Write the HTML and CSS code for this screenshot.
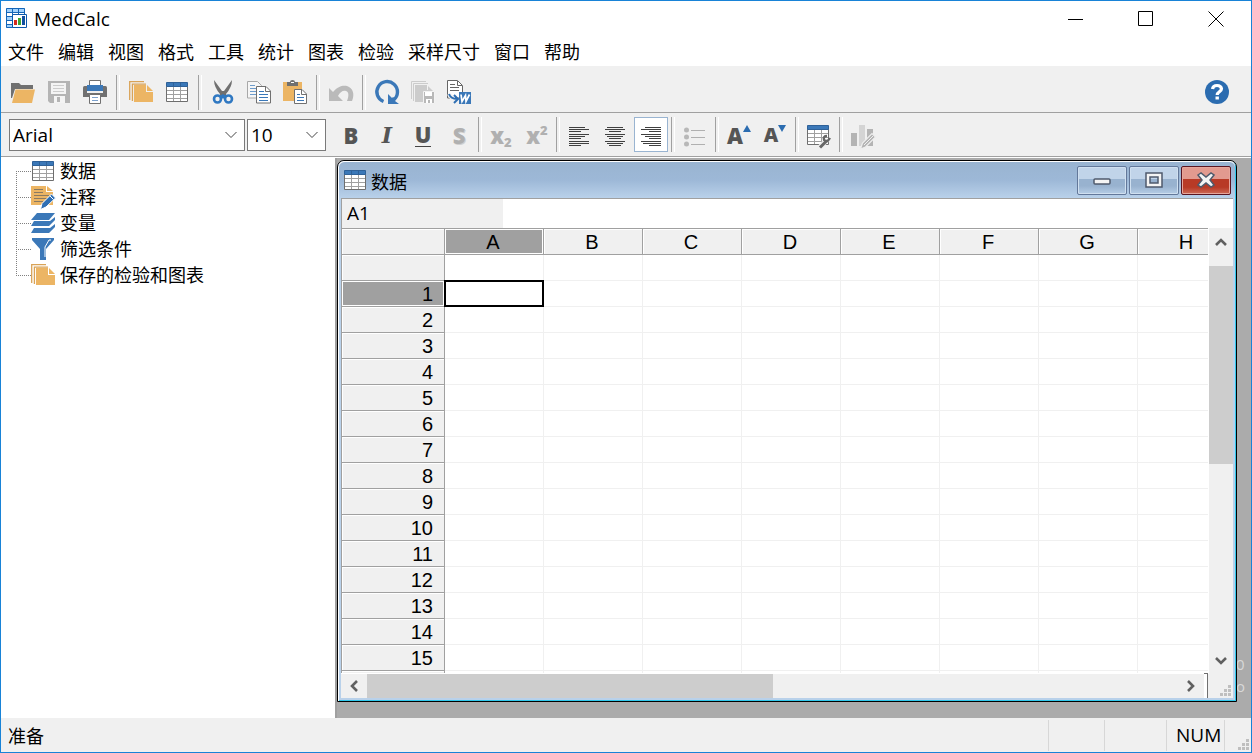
FILE: index.html
```html
<!DOCTYPE html>
<html lang="zh-CN">
<head>
<meta charset="utf-8">
<title>MedCalc</title>
<link rel="stylesheet" href="styles.css">
</head>
<body>
<svg class="defs" aria-hidden="true">
  <symbol id="i-table" viewBox="0 0 24 24">
    <path fill="#fff" stroke="#6e6e6e" d="M1.500 6.500h21v15h-21z"/>
    <path fill="none" stroke="#a0a0a0" d="M8.500 7v14M15.500 7v14M2 10.500h20M2 14.500h20M2 18.500h20"/>
    <path fill="#3b78b8" stroke="#2f6198" d="M1.500 2.500h21v4h-21z"/>
    <path stroke="#2f6198" d="M8.500 3v3M15.500 3v3"/>
  </symbol>
  <symbol id="i-stack" viewBox="0 0 24 24">
    <path fill="none" stroke="#d9a357" stroke-width="1.300" d="M.7 20V1.700H15M3.400 21V4.200H17"/>
    <path fill="#ecb564" d="M5 5h12v7h7v10H5z"/>
    <path fill="#ecb564" d="M18 5l6 6h-6z"/>
  </symbol>
</svg>
<div class="app">
  <header class="titlebar">
    <svg class="logo" viewBox="0 0 21 21" aria-hidden="true">
      <path fill="#9fd0fb" d="M0 0h19v20H0z"/>
      <path fill="#fff" d="M1 5h5v3H1zM7 5h5v3H7zM13 5h5v3h-5zM1 13h5v3H1z"/>
      <path fill="none" stroke="#1566b8" d="M.5.500h18v19H.5zM6.500 0v20M12.500 0v8M0 4.500h19M0 8.500h8M0 12.500h8M0 16.500h8"/>
      <path fill="#fff" stroke="#0b58ab" d="M6.500 6.500h14v13h-14z"/>
      <path fill="#d52b1e" d="M8 12h3v5H8z"/><path fill="#3da52e" d="M12 10h3v7h-3z"/><path fill="#114f9e" d="M16 8h3v9h-3z"/>
    </svg>
    <h1>MedCalc</h1>
    <div class="sysbuttons">
      <button aria-label="最小化"><svg viewBox="0 0 16 16"><path d="M0 8.500h15"/></svg></button>
      <button aria-label="最大化"><svg viewBox="0 0 16 16"><path d="M.5.500h14v14H.5z"/></svg></button>
      <button aria-label="关闭"><svg viewBox="0 0 16 16"><path d="M.5.500l15 15M15.500.500l-15 15"/></svg></button>
    </div>
  </header>
  <nav class="menubar">
    <button>文件</button><button>编辑</button><button>视图</button><button>格式</button><button>工具</button><button>统计</button><button>图表</button><button>检验</button><button>采样尺寸</button><button>窗口</button><button>帮助</button>
  </nav>
  <div class="toolbar standard" role="toolbar" aria-label="标准">
    <button aria-label="打开"><svg viewBox="0 0 24 24"><path fill="#707070" d="M0 3h8l2 2h12v4H4L1 18H0z"/><path fill="#ecb564" d="M4.500 9.500H24L21 23H1z"/></svg></button>
    <button aria-label="保存"><svg viewBox="0 0 24 24"><path fill="#b4b4b4" d="M1 1h22v22H3l-2-2z"/><path fill="#f4f4f4" d="M4 3h15v11H4zM7 16h11v7H7z"/><path stroke="#ccc" d="M6 5.500h11M6 8.500h11M6 11.500h11"/><path fill="#b4b4b4" d="M10 17h3v5h-3z"/></svg></button>
    <button aria-label="打印"><svg viewBox="0 0 24 24"><path fill="#707070" d="M0 7.500Q0 6 1.500 6h21Q24 6 24 7.500V17H0z"/><path fill="#fff" stroke="#707070" d="M6.500.500h11V6h-11z"/><path fill="#3b78b8" d="M4 5h16v6H4z"/><path fill="#efefef" d="M4 11h16v2H4z"/><path fill="#fff" stroke="#707070" d="M6.500 14.500h11v9h-11z"/><path stroke="#7ba0cc" d="M9 17.500h6M9 20.500h6"/></svg></button>
    <i class="sep"></i>
    <button aria-label="保存的检验和图表"><svg><use href="#i-stack"/></svg></button>
    <button aria-label="数据表"><svg><use href="#i-table"/></svg></button>
    <i class="sep"></i>
    <button aria-label="剪切"><svg viewBox="0 0 24 24"><path fill="#707070" d="M3 0l8 11 1 4-3-1Q3 7 3 0zM21 0l-8 11-1 4 3-1Q21 7 21 0z"/><path fill="#707070" d="M9 11h6v5H9z"/><g fill="none" stroke="#2f78c2" stroke-width="2.600"><circle cx="6.500" cy="19" r="3.500"/><circle cx="17.500" cy="19" r="3.500"/></g><path fill="#2f78c2" d="M9 16l3-2 3 2-3 3z"/></svg></button>
    <button aria-label="复制"><svg viewBox="0 0 24 24"><path fill="#f6f6f6" stroke="#a8a8a8" d="M.5 1.500h10l4 4V18H.5z"/><path stroke="#6d9ccc" d="M3 5.500h5M3 8.500h6M3 11.500h6M3 14.500h6"/><path fill="#fff" stroke="#707070" d="M9.500 6.500H19l4.500 4.500v12h-14z"/><path fill="none" stroke="#707070" d="M18.500 7v4.500H23"/><path stroke="#3b78b8" d="M12 11.500h5M12 14.500h9M12 17.500h9M12 20.500h9"/></svg></button>
    <button aria-label="粘贴"><svg viewBox="0 0 24 24"><path fill="#ecb564" d="M0 2h19v8h-8v11H0z"/><path fill="#707070" d="M4 2h3q0-2 2.500-2T12 2h3v4H4z"/><path fill="#fff" d="M8 2h3v1H8z"/><path fill="#fff" stroke="#707070" d="M11.500 9.500H19l4.500 4.500v9.500h-12z"/><path fill="none" stroke="#707070" d="M18.500 10v4.500H23"/><path stroke="#3b78b8" d="M14 14.500h3M14 17.500h7M14 20.500h7"/></svg></button>
    <i class="sep"></i>
    <button aria-label="撤消"><svg viewBox="0 0 24 24"><path fill="#bababa" d="M0 8l4 4C9 6 14 5 18 6c6 2 8 8 5 15h-5c2-5 2-9-1-10-3-1-6 1-8 5l5 5H0z"/></svg></button>
    <i class="sep"></i>
    <button aria-label="重新计算"><svg viewBox="0 0 24 24"><path fill="none" stroke="#3b78b8" stroke-width="3.400" d="M8.500 21.500A10.300 10.300 0 1 1 18.500 20"/><path fill="#3b78b8" d="M13 14v10h11l-4-3 1-2-3-2-1 1z"/></svg></button>
    <button aria-label="保存全部"><svg viewBox="0 0 24 24"><path fill="none" stroke="#ccc" d="M.5 19V1.500H15M2.500 21V3.500H17"/><path fill="#ccc" d="M4 5h12l7 7v10H4z"/><path stroke="#f3f3f3" d="M16.500 5v5"/><path fill="#b8b8b8" stroke="#f3f3f3" d="M12.500 11.500h11v12h-11z"/><path fill="#fff" d="M14 12h7v4h-7zM15 19h6v4h-6z"/><path fill="#b8b8b8" d="M17 20h2v3h-2z"/></svg></button>
    <button aria-label="导出到 Word"><svg viewBox="0 0 24 24"><path fill="#fff" stroke="#666" d="M.5.500h10l5 5V18H.5z"/><path fill="none" stroke="#666" d="M10.500 1v4.500H15M3 4.500h5M3 7.500h9M3 10.500h9"/><path fill="#3b78b8" d="M12 12h12v12H12z"/><path fill="none" stroke="#efefef" stroke-width="4" d="M2 14q2 5 8 5"/><path fill="none" stroke="#2f6fb3" stroke-width="2" d="M2 14q2 5 8 5M7 15l4 4-4 4"/><path fill="none" stroke="#fff" stroke-width="1.700" d="M14 14.500l1 7 3.500-6 .5 6 3.500-7"/></svg></button>
    <button class="help" aria-label="帮助"><svg viewBox="0 0 24 24"><circle cx="12" cy="12" r="12" fill="#2b6cb0"/><path fill="none" stroke="#fff" stroke-width="3.200" d="M7.500 9Q8 5.500 12 5.500t4.500 3.300c0 3-4.300 3-4.300 6.200"/><path fill="#fff" d="M10.500 16.500h3.400v3h-3.400z"/></svg></button>
  </div>
  <div class="toolbar format" role="toolbar" aria-label="格式">
    <label class="combo font"><select aria-label="字体"><option>Arial</option></select><svg viewBox="0 0 12 8"><path d="M.5 1l5.500 5.500L11.500 1"/></svg></label>
    <label class="combo size"><select aria-label="字号"><option>10</option></select><svg viewBox="0 0 12 8"><path d="M.5 1l5.500 5.500L11.500 1"/></svg></label>
    <button class="glyph" aria-label="加粗"><b>B</b></button>
    <button class="glyph serif" aria-label="倾斜"><b>I</b></button>
    <button class="glyph" aria-label="下划线"><b class="under">U</b></button>
    <button class="glyph off shadow" aria-label="阴影"><b>S</b></button>
    <i class="sep tight"></i>
    <button class="glyph off" aria-label="下标"><b>x<sub>2</sub></b></button>
    <button class="glyph off" aria-label="上标"><b>x<sup>2</sup></b></button>
    <i class="sep tight"></i>
    <button aria-label="左对齐"><svg viewBox="0 0 24 24"><path stroke="#404040" d="M2 4.500h16M2 6.500h20M2 8.500h12M2 11.500h20M2 13.500h16M2 15.500h12M2 18.500h20M2 20.500h20M2 22.500h12"/></svg></button>
    <button aria-label="居中"><svg viewBox="0 0 24 24"><path stroke="#404040" d="M4 4.500h16M2 6.500h20M6 8.500h12M2 11.500h20M4 13.500h16M6 15.500h12M2 18.500h20M4 20.500h16M6 22.500h12"/></svg></button>
    <button class="pressed" aria-label="右对齐" aria-pressed="true"><svg viewBox="0 0 24 24"><path stroke="#404040" d="M6 4.500h16M2 6.500h20M10 8.500h12M2 11.500h20M6 13.500h16M10 15.500h12M2 18.500h20M4 20.500h18M10 22.500h12"/></svg></button>
    <i class="sep narrow"></i>
    <button aria-label="列表"><svg viewBox="0 0 24 24"><g fill="#b8b8b8"><circle cx="3.500" cy="7" r="2.500"/><circle cx="3.500" cy="14" r="2.500"/><circle cx="3.500" cy="21" r="2.500"/></g><path stroke="#b0b0b0" d="M8 7.500h14M8 14.500h14M8 21.500h14"/></svg></button>
    <i class="sep narrow"></i>
    <button class="glyph grow" aria-label="增大字号"><b>A</b><svg viewBox="0 0 8 7"><path d="M0 7l4-7 4 7z"/></svg></button>
    <button class="glyph shrink" aria-label="减小字号"><b>A</b><svg viewBox="0 0 8 7"><path d="M0 0l4 7 4-7z"/></svg></button>
    <i class="sep narrow"></i>
    <button aria-label="表格格式"><svg viewBox="0 0 24 24"><path fill="#fff" stroke="#6e6e6e" d="M.5 6.500h21v15H.5z"/><path fill="none" stroke="#a0a0a0" d="M7.500 7v14M14.500 7v14M1 10.500h20M1 14.500h20M1 18.500h20"/><path fill="#3b78b8" stroke="#2f6198" d="M.5 2.500h21v4H.5z"/><path fill="none" stroke="#efefef" stroke-width="5" d="M13 24l7-7"/><path fill="none" stroke="#666" stroke-width="3" d="M13 24.500l7-7"/><path fill="none" stroke="#666" stroke-width="2.400" d="M20 13q-4 0-3 4 3 3 6-2"/></svg></button>
    <i class="sep narrow"></i>
    <button aria-label="图表格式"><svg viewBox="0 0 24 24"><path fill="#b4b4b4" d="M0 10h6v13H0zM16 6h6v17h-6z"/><path fill="#d4d4d4" d="M8 2h6v21H8z"/><path fill="#b4b4b4" stroke="#efefef" stroke-width="1.200" d="M9.500 26l2-6L21 10.500l3.500 3.500-10 10z"/><path stroke="#efefef" d="M13 22l9-9"/></svg></button>
  </div>
  <main class="workspace">
    <aside class="explorer">
      <ul>
        <li><svg><use href="#i-table"/></svg><span>数据</span></li>
        <li><svg viewBox="0 0 24 24"><path fill="#ecb564" d="M0 1h15v6h7v13H0z"/><path fill="#ecb564" d="M16 1l6 5h-6z"/><path stroke="#8a7a62" d="M3 4.500h9M3 7.500h9M3 10.500h15M3 13.500h14M3 16.500h9"/><path fill="#2f6fb3" stroke="#fff" d="M9.500 24.500l1.500-6L20.500 9l4 4L15 22z"/><path stroke="#fff" d="M19 11l3.500 3.500"/></svg><span>注释</span></li>
        <li><svg viewBox="0 0 24 24"><g fill="#3b78b8"><path d="M6 2h18l-6 7H0z"/><path d="M3 10h16l5-4v3l-6 6H0zM3 17h16l5-4v3l-6 6H0z"/></g></svg><span>变量</span></li>
        <li><svg viewBox="0 0 24 24"><path fill="#3b78b8" d="M1 1h22v2l-8 9v11H9V12L1 3z"/><path fill="none" stroke="#fff" d="M20 3h-2l-4 7v10"/></svg><span>筛选条件</span></li>
        <li><svg><use href="#i-stack"/></svg><span>保存的检验和图表</span></li>
      </ul>
    </aside>
    <section class="desktop">
      <div class="residue"><span>0</span><span>o</span></div>
      <article class="child">
        <header class="child-title">
          <svg><use href="#i-table"/></svg><h2>数据</h2>
          <button aria-label="最小化"><svg viewBox="0 0 18 16"><rect x="1" y="7" width="16" height="5" rx="1"/></svg></button>
          <button aria-label="还原"><svg viewBox="0 0 18 16"><path fill-rule="evenodd" d="M1 1h16v14H1zM5 5v6h8V5z"/></svg></button>
          <button class="close" aria-label="关闭"><svg viewBox="0 0 18 16"><path d="M1 3l3-2 5 4 5-4 3 2-4 5 4 5-3 2-5-4-5 4-3-2 4-5z"/></svg></button>
        </header>
        <div class="formula">
          <input class="ref" aria-label="单元格" value="A1">
          <input class="expr" aria-label="公式">
        </div>
        <div class="sheet">
          <div class="grid">
            <table>
              <colgroup><col class="rows"><col><col><col><col><col><col><col><col></colgroup>
              <thead><tr><th></th><th class="sel">A</th><th>B</th><th>C</th><th>D</th><th>E</th><th>F</th><th>G</th><th>H</th></tr></thead>
              <tbody>
                <tr><th></th><td></td><td></td><td></td><td></td><td></td><td></td><td></td><td></td></tr>
                <tr><th class="sel">1</th><td class="cursor"></td><td></td><td></td><td></td><td></td><td></td><td></td><td></td></tr>
                <tr><th>2</th><td></td><td></td><td></td><td></td><td></td><td></td><td></td><td></td></tr>
                <tr><th>3</th><td></td><td></td><td></td><td></td><td></td><td></td><td></td><td></td></tr>
                <tr><th>4</th><td></td><td></td><td></td><td></td><td></td><td></td><td></td><td></td></tr>
                <tr><th>5</th><td></td><td></td><td></td><td></td><td></td><td></td><td></td><td></td></tr>
                <tr><th>6</th><td></td><td></td><td></td><td></td><td></td><td></td><td></td><td></td></tr>
                <tr><th>7</th><td></td><td></td><td></td><td></td><td></td><td></td><td></td><td></td></tr>
                <tr><th>8</th><td></td><td></td><td></td><td></td><td></td><td></td><td></td><td></td></tr>
                <tr><th>9</th><td></td><td></td><td></td><td></td><td></td><td></td><td></td><td></td></tr>
                <tr><th>10</th><td></td><td></td><td></td><td></td><td></td><td></td><td></td><td></td></tr>
                <tr><th>11</th><td></td><td></td><td></td><td></td><td></td><td></td><td></td><td></td></tr>
                <tr><th>12</th><td></td><td></td><td></td><td></td><td></td><td></td><td></td><td></td></tr>
                <tr><th>13</th><td></td><td></td><td></td><td></td><td></td><td></td><td></td><td></td></tr>
                <tr><th>14</th><td></td><td></td><td></td><td></td><td></td><td></td><td></td><td></td></tr>
                <tr><th>15</th><td></td><td></td><td></td><td></td><td></td><td></td><td></td><td></td></tr>
                <tr><th></th><td></td><td></td><td></td><td></td><td></td><td></td><td></td><td></td></tr>
              </tbody>
            </table>
          </div>
          <div class="vscroll">
            <button aria-label="向上滚动"><svg viewBox="0 0 12 12"><path d="M1 9l5-5 5 5"/></svg></button>
            <div class="track"><div class="thumb"></div></div>
            <button aria-label="向下滚动"><svg viewBox="0 0 12 12"><path d="M1 3l5 5 5-5"/></svg></button>
          </div>
          <div class="hscroll">
            <button aria-label="向左滚动"><svg viewBox="0 0 12 12"><path d="M9 1L4 6l5 5"/></svg></button>
            <div class="track"><div class="thumb"></div></div>
            <button aria-label="向右滚动"><svg viewBox="0 0 12 12"><path d="M3 1l5 5-5 5"/></svg></button>
            <i class="split"></i>
          </div>
          <div class="corner"><svg class="grip" viewBox="0 0 11 11"><path d="M8 0h3v3H8zM4 4h3v3H4zM8 4h3v3H8zM0 8h3v3H0zM4 8h3v3H4zM8 8h3v3H8z"/></svg></div>
        </div>
      </article>
    </section>
  </main>
  <footer class="status">
    <span class="ready">准备</span>
    <span class="pane"></span><span class="pane"></span><span class="pane num">NUM</span>
    <span class="pane end"><svg class="grip" viewBox="0 0 11 11"><path d="M8 0h3v3H8zM4 4h3v3H4zM8 4h3v3H8zM0 8h3v3H0zM4 8h3v3H4zM8 8h3v3H8z"/></svg></span>
  </footer>
</div>
</body>
</html>
```
FILE: styles.css
```css
* { box-sizing: border-box; }
body {
  margin: 0;
  font: 19px/24px "Open Sans", "Noto Sans CJK SC", sans-serif;
  color: #000;
}
h1, h2, ul { margin: 0; padding: 0; font: inherit; }
button, input, select { font: inherit; color: inherit; border: 0; border-radius: 0; background: none; padding: 0; margin: 0; }
svg { display: block; flex: none; }
.defs { display: none; }

.app {
  display: flex;
  flex-direction: column;
  height: 100vh;
  border: 1px solid #1883d7;
  background: #f0f0f0;
}

.titlebar { display: flex; align-items: center; height: 35px; padding-left: 5px; background: #fff; }
.logo { width: 21px; height: 21px; margin-right: 7px; }
.sysbuttons { display: flex; margin-left: auto; }
.sysbuttons button { display: grid; place-items: center; width: 70px; height: 36px; }
.sysbuttons svg { width: 16px; height: 16px; fill: none; stroke: #000; }

.menubar,
.explorer ul,
.child-title h2,
.ready { font-family: "Noto Sans CJK SC", sans-serif; font-size: 18px; }
.menubar { display: flex; gap: 14px; height: 30px; padding: 0 7px; background: #fff; }

.toolbar { display: flex; align-items: center; padding-left: 4px; border-bottom: 1px solid #a0a0a0; }
.toolbar button { display: grid; place-items: center; flex: none; width: 36px; height: 36px; }
.toolbar button > svg { width: 24px; height: 24px; overflow: visible; }
.standard { height: 47px; padding-top: 6px; }
.standard .help { margin: 0 16px 0 auto; }
.format { height: 44px; padding-left: 8px; }
.sep { flex: none; width: 10px; height: 35px; display: flex; justify-content: center; }
.sep::before { content: ""; width: 2px; border: solid; border-width: 0 1px; border-color: #a0a0a0 #fff #a0a0a0 #a0a0a0; }
.sep.tight { width: 6px; }
.sep.narrow { width: 8px; }

.combo { position: relative; height: 32px; }
.combo select { appearance: none; width: 100%; height: 32px; padding: 0 3px; border: 1px solid #7a7a7a; background: #fff; }
.combo svg { position: absolute; right: 8px; top: 12px; width: 12px; height: 8px; fill: none; stroke: #444; pointer-events: none; }
.combo.font { width: 236px; margin-right: 2px; }
.combo.size { width: 79px; margin-right: 7px; }

.toolbar .glyph { font: 22px/28px "Open Sans", sans-serif; color: #555; }
.glyph b { font-weight: 800; }
.toolbar .serif { font-family: "DejaVu Serif", serif; font-style: italic; }
.under { border-bottom: 1px solid #444; line-height: 22px; height: 24px; }
.toolbar .off { color: #b0b0b0; }
.shadow { text-shadow: 1px 1px #d0d0d0; }
.glyph sub, .glyph sup { font-size: 13px; line-height: 0; }
.glyph sub { vertical-align: -3px; }
.glyph sup { vertical-align: 9px; }
.toolbar .grow, .toolbar .shrink { display: flex; justify-content: center; align-items: center; }
.toolbar .shrink { font-size: 20px; }
.toolbar .grow svg, .toolbar .shrink svg { width: 8px; height: 7px; fill: #2b6cb0; align-self: flex-start; margin-top: 8px; }
.toolbar .pressed { width: 34px; height: 35px; margin: 0 1px; border: 1px solid #99b4d1; background: #fff; }

.workspace { display: flex; flex: 1; min-height: 0; border-top: 1px solid #fff; }
.explorer { flex: none; width: 334px; background: #fff; }
.explorer ul { list-style: none; padding-left: 15px; }
.explorer li { position: relative; display: flex; align-items: center; height: 26px; }
.explorer li::before { content: ""; width: 15px; height: 1px; background: repeating-linear-gradient(90deg, #808080 0 1px, transparent 1px 2px); }
.explorer li + li::after { content: ""; position: absolute; left: 0; top: -13px; width: 1px; height: 26px; background: repeating-linear-gradient(#808080 0 1px, transparent 1px 2px); }
.explorer svg { width: 24px; height: 24px; margin-right: 5px; overflow: visible; }
.explorer span { padding-bottom: 2px; }

.desktop {
  position: relative;
  display: flex;
  flex: 1;
  min-width: 0;
  padding: 2px 14px 16px 0;
  border-left: 2px solid #a0a0a0;
  background: #ababab;
}
.residue { position: absolute; right: 6px; bottom: 21px; display: grid; color: #d8d8d8; font-size: 15px; line-height: 22px; }

.child {
  position: relative;
  display: flex;
  flex-direction: column;
  flex: 1;
  min-width: 0;
  padding: 0 3px 3px;
  border: 1px solid #000;
  border-radius: 7px 7px 0 0;
  background: #b9d1ea;
  box-shadow: inset 1px 1px #fff, inset -1px -1px #30c8ec;
}
.child-title {
  display: flex;
  align-items: center;
  gap: 2px;
  height: 37px;
  flex: none;
  margin: 0 -2px;
  padding: 0 4px;
  background: linear-gradient(#99b4d1 0, #9db8d7 50%, #b9d1ea);
  border-top: 1px solid #fff;
  border-radius: 6px 6px 0 0;
}
.child-title > svg { width: 24px; height: 24px; }
.child-title h2 { margin-right: auto; padding: 1px 0 0 2px; }
.child-title button {
  display: grid;
  place-items: center;
  width: 50px;
  height: 29px;
  border: 1px solid #63789a;
  border-radius: 2px;
  background: linear-gradient(#c1d4e9 0 45%, #98b2cf 45% 70%, #b6cde6);
  box-shadow: inset 0 0 0 1px #d0e0f0;
}
.child-title button svg { width: 18px; height: 16px; fill: #f4f4f4; stroke: #4f5a6c; stroke-width: 1.500; }
.child-title .close { border-color: #5a1420; background: linear-gradient(#e29a8f 0 45%, #b83a26 45% 75%, #cd6b58); box-shadow: inset 0 0 0 1px #e6a69b; }

.formula { display: flex; flex: none; height: 30px; border: solid #a0a0a0; border-width: 1px 0 0 1px; background: #fff; }
.ref { width: 161px; background: #f0f0f0; padding: 0 0 2px 5px; }
.expr { flex: 1; min-width: 0; background: #fff; }

.sheet { display: grid; flex: 1; min-height: 0; grid-template: minmax(0, 1fr) 24px / minmax(0, 1fr) 24px; background: #fff; }
.grid { overflow: hidden; margin: 0 1px 1px 0; border: solid #a0a0a0; border-width: 1px 0 0 1px; }
table { table-layout: fixed; width: 895px; border-collapse: separate; border-spacing: 0; font: 20px/24px "Liberation Sans", Arial, sans-serif; }
col { width: 99px; }
col.rows { width: 103px; }
th, td { height: 26px; padding: 0; border: solid #f0f0f0; border-width: 0 1px 1px 0; }
th { font-weight: 400; background: #f0f0f0; border-color: #a0a0a0; box-shadow: inset 1px 1px #fff; }
thead th { padding-right: 2px; }
tbody th { text-align: right; padding-right: 11px; }
th.sel { background: #a0a0a0; box-shadow: inset 0 0 0 1px #fff; }
.cursor { position: relative; }
.cursor::after { content: ""; position: absolute; inset: -1px; border: 2px solid #000; }

.vscroll, .hscroll { display: flex; background: #f0f0f0; }
.vscroll { flex-direction: column; }
.sheet button { display: grid; place-items: center; flex: none; width: 26px; height: 24px; }
.sheet .vscroll button { width: 24px; height: 27px; }
.sheet button svg { width: 12px; height: 12px; fill: none; stroke: #606060; stroke-width: 2.600; }
.track { flex: 1; display: flex; }
.vscroll .track { flex-direction: column; padding-top: 11px; }
.thumb { background: #cdcdcd; }
.hscroll .thumb { width: 50%; }
.vscroll .thumb { height: 52%; }
.split { width: 4px; margin: -1px 1px 0 0; border: solid #707070; border-width: 1px 1px 0 0; background: #fff; }
.corner { display: flex; justify-content: flex-end; align-items: flex-end; padding: 2px; background: #f0f0f0; }
.grip { width: 11px; height: 11px; fill: #bfbfbf; }

.status { display: flex; flex: none; height: 34px; padding-left: 7px; line-height: 34px; }
.ready { margin-right: auto; }
.pane { width: 56px; margin: 2px 0 1px; border-left: 1px solid #d7d7d7; line-height: 31px; }
.pane.num { width: 58px; padding-left: 9px; }
.pane + .pane.num { margin-left: 6px; }
.pane.end { width: 27px; display: flex; justify-content: flex-end; align-items: flex-end; padding: 0 2px 1px 0; }
```
